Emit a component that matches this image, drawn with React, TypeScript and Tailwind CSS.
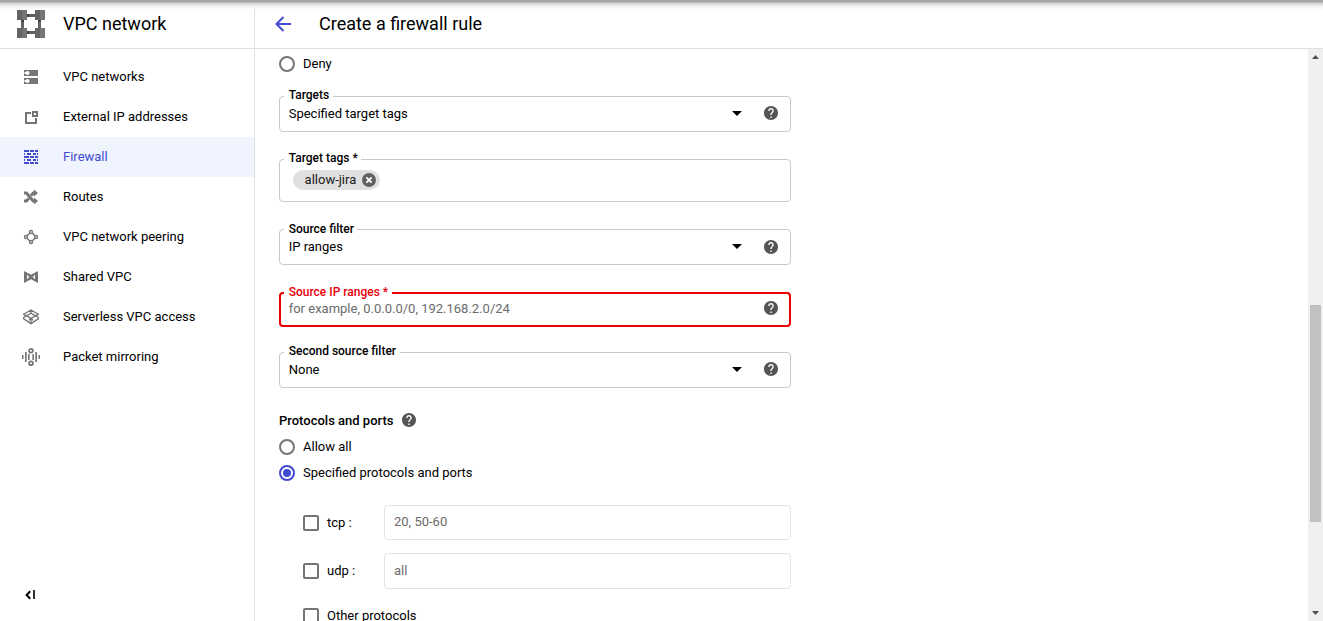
import type { ReactNode } from "react";

const GREY = "#757575";

function Logo() {
  const cells = [
    [0, 0],
    [18, 0],
    [0, 18],
    [18, 18],
  ];
  return (
    <svg width="28" height="28" viewBox="0 0 28 28" shapeRendering="crispEdges">
      <path d="M10 4h8v3h-8zM10 21h8v3h-8zM4 10h3v8H4zM21 10h3v8h-3z" fill="#616161" />
      <path d="M10 4h2v3h-2zM10 21h2v3h-2zM4 10h3v2H4zM21 10h3v2h-3z" fill="#424242" />
      {cells.map(([x, y]) => (
        <g key={`${x}-${y}`}>
          <rect x={x} y={y} width="10" height="10" fill="#757575" />
          <rect x={x} y={y} width="5" height="10" fill="#646464" />
        </g>
      ))}
    </svg>
  );
}

function Svg({ children, color = GREY }: { children: ReactNode; color?: string }) {
  return (
    <svg width="18" height="18" viewBox="0 0 18 18" fill={color} stroke="none">
      {children}
    </svg>
  );
}

const NetworksIcon = (
  <Svg>
    <path d="M2 2h14v6H2zM2 10h14v6H2z" />
    <circle cx="5.5" cy="5" r="2" fill="#fff" />
    <circle cx="5.5" cy="13" r="2" fill="#fff" />
    <path d="M2 4h2v2H2zM2 12h2v2H2z" fill="#fff" />
    <path d="M2 4.4h1v1.2H2zM2 12.4h1v1.2H2z" />
  </Svg>
);

const ExternalIcon = (
  <Svg>
    <path d="M3 4h6v2H5v8h8v-4h2v6H3z" />
    <path fillRule="evenodd" d="M10 3h6v6h-6zM12 5v2h2V5z" />
  </Svg>
);

const FirewallIcon = (
  <Svg color="#3f4bd1">
    <path
      shapeRendering="crispEdges"
      d="M2 2h5v2H2zM8 2h4v2H8zM13 2h3v2h-3zM2 5h1v2H2zM5 5h4v2H5zM11 5h3v2h-3zM15 5h1v2h-1zM2 8h5v2H2zM8 8h4v2H8zM13 8h3v2h-3zM2 11h1v2H2zM5 11h4v2H5zM11 11h3v2h-3zM15 11h1v2h-1zM2 14h5v2H2zM8 14h4v2H8zM13 14h3v2h-3z"
    />
  </Svg>
);

const RoutesIcon = (
  <Svg>
    <path
      d="M2 5h2.4l6.8 8H13M2 13h2.4l2.3-2.6M9.1 7.6 11.2 5H13"
      fill="none"
      stroke={GREY}
      strokeWidth="3"
    />
    <path d="M12 1.4 16 5l-4 3.6zM12 9.4l4 3.6-4 3.6z" />
  </Svg>
);

const PeeringIcon = (
  <Svg>
    <g fill="none" stroke={GREY} strokeWidth="1.4">
      <circle cx="9" cy="4" r="1.5" />
      <circle cx="9" cy="14" r="1.5" />
      <circle cx="4" cy="9" r="1.5" />
      <circle cx="14" cy="9" r="1.5" />
      <path d="M7.8 5.1 5.1 7.8M10.2 5.1l2.7 2.7M7.8 12.9l-2.7-2.7M10.2 12.9l2.7-2.7" />
    </g>
  </Svg>
);

const SharedIcon = (
  <Svg>
    <path fillRule="evenodd" d="M2 3l7 3.8L16 3v12l-7-3.8L2 15zM5 6.8v4.4L7.3 9zM13 6.8v4.4L10.7 9z" />
  </Svg>
);

const ServerlessIcon = (
  <Svg>
    <g fill="none" stroke={GREY} strokeWidth="1.3">
      <path d="M9 2l7.3 4.3-2.6 1.6L9 5.2 4.3 7.9 1.7 6.3zM4.3 7.9 1.7 9.5 1.7 10.8 9 15.6l7.3-4.8V9.5l-2.6-1.6M1.7 6.3 9 10.4l7.3-4.1M9 2v4M9 9.8v5M6.8 12.4 9 10.2l2.2 2.2" />
    </g>
  </Svg>
);

const MirroringIcon = (
  <Svg>
    <path d="M0 7h1.5v4H0zM3 4h1.7v10H3zM13.3 4H15v10h-1.7zM16.5 7H18v4h-1.5zM6 6h1.6v6H6zM10.4 6H12v6h-1.6z" />
    <circle cx="9" cy="2.8" r="1.9" fill="none" stroke={GREY} strokeWidth="1.8" />
    <circle cx="9" cy="15.2" r="1.9" fill="none" stroke={GREY} strokeWidth="1.8" />
  </Svg>
);

const navItems: { label: string; icon: ReactNode; active?: boolean }[] = [
  { label: "VPC networks", icon: NetworksIcon },
  { label: "External IP addresses", icon: ExternalIcon },
  { label: "Firewall", icon: FirewallIcon, active: true },
  { label: "Routes", icon: RoutesIcon },
  { label: "VPC network peering", icon: PeeringIcon },
  { label: "Shared VPC", icon: SharedIcon },
  { label: "Serverless VPC access", icon: ServerlessIcon },
  { label: "Packet mirroring", icon: MirroringIcon },
];

function Help() {
  return (
    <svg className="shrink-0" width="14" height="14" viewBox="2 2 20 20" fill="#555">
      <path d="M12 2C6.48 2 2 6.48 2 12s4.48 10 10 10 10-4.48 10-10S17.52 2 12 2zm1 17h-2v-2h2v2zm2.07-7.75l-.9.92C13.45 12.9 13 13.5 13 15h-2v-.5c0-1.1.45-2.1 1.17-2.83l1.24-1.26c.37-.36.59-.86.59-1.41 0-1.1-.9-2-2-2s-2 .9-2 2H8c0-2.21 1.79-4 4-4s4 1.79 4 4c0 .88-.36 1.68-.93 2.25z" />
    </svg>
  );
}

function Caret() {
  return (
    <svg className="mr-[22px] shrink-0" width="10" height="5" viewBox="0 0 10 5">
      <path d="M0 0l5 5 5-5z" />
    </svg>
  );
}

function SelectField({
  label,
  value,
  className,
  labelTop = "-top-[10px]",
  helpTop = "mt-[9px]",
}: {
  label: string;
  value: string;
  className: string;
  labelTop?: string;
  helpTop?: string;
}) {
  return (
    <div className={`relative flex h-9 w-[512px] items-start rounded border border-[#c9c9c9] pl-[8.7px] pr-3 ${className}`}>
      <span className={`absolute left-[3.7px] bg-white pl-[5px] pr-[3.5px] text-xs font-medium leading-4 ${labelTop}`}>
        {label}
      </span>
      <span className="flex h-[33px] grow items-center">{value}</span>
      <div className="flex h-[33px] items-center">
        <Caret />
      </div>
      <div className={helpTop}>
        <Help />
      </div>
    </div>
  );
}

function Radio({ label, checked, className }: { label: string; checked?: boolean; className: string }) {
  return (
    <div className={`flex h-4 items-center gap-2 ${className}`}>
      <span
        className={`flex size-4 items-center justify-center rounded-full border-2 ${
          checked ? "border-[#3f4bd1]" : "border-[#757575]"
        }`}
      >
        {checked && <span className="size-2 rounded-full bg-[#3f4bd1]" />}
      </span>
      <span>{label}</span>
    </div>
  );
}

function Checkbox({ label }: { label: string }) {
  return (
    <div className="flex min-w-[81px] shrink-0 items-center gap-2 whitespace-nowrap">
      <span className="size-4 shrink-0 rounded-[2px] border-2 border-[#757575]" />
      <span>{label}</span>
    </div>
  );
}

export default function App() {
  return (
    <div className="relative flex h-[621px] w-[1323px] overflow-hidden bg-white font-['Roboto',sans-serif] text-[13px] leading-4 text-black">
      <aside className="flex w-[255px] shrink-0 flex-col border-r border-[#e0e0e0]">
        <div className="flex h-[49px] items-center border-b border-[#e0e0e0] pl-[17px]">
          <Logo />
          <span className="ml-[18px] text-lg leading-6">VPC network</span>
        </div>
        <nav className="mt-2">
          {navItems.map(({ label, icon, active }) => (
            <div
              key={label}
              className={`flex h-10 items-center gap-[23px] pl-[22px] ${active ? "bg-[#f0f4ff] text-[#3f4bd1]" : ""}`}
            >
              {icon}
              <span>{label}</span>
            </div>
          ))}
        </nav>
        <div className="mb-[21px] ml-[25px] mt-auto">
          <svg width="11" height="10" viewBox="0 0 11 10">
            <path d="M5.2 1.2 1.6 5l3.6 3.8" fill="none" stroke="#000" strokeWidth="2" />
            <path d="M8 0h2v9H8z" fill="#303030" />
          </svg>
        </div>
      </aside>

      <div className="flex grow flex-col">
        <header className="flex h-[49px] shrink-0 items-center border-b border-[#e0e0e0] pl-5">
          <svg width="16" height="16" viewBox="0 0 16 16" fill="none" stroke="#3f4bd1" strokeWidth="2">
            <path d="M16 8H1.8M8.5 1 1.5 8l7 7" />
          </svg>
          <h1 className="ml-7 text-lg leading-6">Create a firewall rule</h1>
        </header>

        <div className="flex min-h-0 grow">
          <main className="h-[572px] grow overflow-hidden pl-6">
            <Radio label="Deny" className="mt-[7px]" />
            <SelectField label="Targets" value="Specified target tags" className="mt-6" />

            <div className="relative mt-[27px] h-[43px] w-[512px] rounded border border-[#c9c9c9] pl-[13px] pt-[10px]">
              <span className="absolute -top-[10px] left-[3.7px] bg-white pl-[5px] pr-[3.5px] text-xs font-medium leading-4">
                Target tags *
              </span>
              <span className="flex h-5 w-[87px] items-center justify-between rounded-full bg-[#e0e0e0] pl-[11.6px] pr-1 text-[#212121]">
                allow-jira
                <svg width="14" height="14" viewBox="0 0 14 14">
                  <circle cx="7" cy="7" r="7" fill="#616161" />
                  <path d="M4.4 4.4l5.2 5.2M9.6 4.4 4.4 9.6" stroke="#fff" strokeWidth="1.8" />
                </svg>
              </span>
            </div>

            <SelectField
              label="Source filter"
              value="IP ranges"
              className="mt-[27px]"
              labelTop="-top-[9px]"
              helpTop="mt-[10px]"
            />

            <div className="relative mt-[27px] flex h-[35px] w-[512px] items-start rounded border-2 border-[#ec0000] pl-[7.7px] pr-[11px]">
              <span className="absolute -top-[10px] left-[2.7px] bg-white pl-[5px] pr-[3.5px] text-xs font-medium leading-4 text-[#e8000b]">
                Source IP ranges *
              </span>
              <span className="flex h-[29px] grow items-center text-[#6b6b6b]">for example, 0.0.0.0/0, 192.168.2.0/24</span>
              <span className="mt-[7px] flex">
                <Help />
              </span>
            </div>

            <SelectField label="Second source filter" value="None" className="mt-[25px]" />

            <div className="mt-[22px] flex h-5 items-center gap-[9px] font-medium">
              <span className="pt-0.5">Protocols and ports</span>
              <Help />
            </div>
            <Radio label="Allow all" className="mt-[9px]" />
            <Radio label="Specified protocols and ports" checked className="mt-[10px]" />

            <div className="mt-6 flex h-[35px] items-center pl-6">
              <Checkbox label="tcp :" />
              <div className="h-[35px] w-[407px] rounded border border-[#e4e4e4] pl-[9px] leading-[32px] text-[#6b6b6b]">
                20, 50-60
              </div>
            </div>
            <div className="mt-[13px] flex h-9 items-center pl-6">
              <Checkbox label="udp :" />
              <div className="h-9 w-[407px] rounded border border-[#e4e4e4] pl-[9px] leading-[33px] text-[#6b6b6b]">
                all
              </div>
            </div>
            <div className="mt-[19px] flex pl-6">
              <Checkbox label="Other protocols" />
            </div>
          </main>

          <div className="flex w-[15px] shrink-0 flex-col items-center bg-[#f0f0f0]">
            <svg className="mt-1.5" width="7" height="4" viewBox="0 0 7 4" fill="#505050">
              <path d="M3.5 0 7 4H0z" />
            </svg>
            <div className="mr-px mt-[246px] h-[217px] w-[11px] bg-[#c1c1c1]" />
            <svg className="mt-[89px]" width="7" height="4" viewBox="0 0 7 4" fill="#505050">
              <path d="M3.5 4 0 0h7z" />
            </svg>
          </div>
        </div>
      </div>

      <div className="absolute inset-x-0 top-0 h-2.5 bg-[linear-gradient(to_bottom,#a4a4a4_0px,#a8a8a8_2px,#cfcfcf_3px,#e4e4e4_5px,#f6f6f6_7px,rgba(255,255,255,0)_10px)]" />
    </div>
  );
}
